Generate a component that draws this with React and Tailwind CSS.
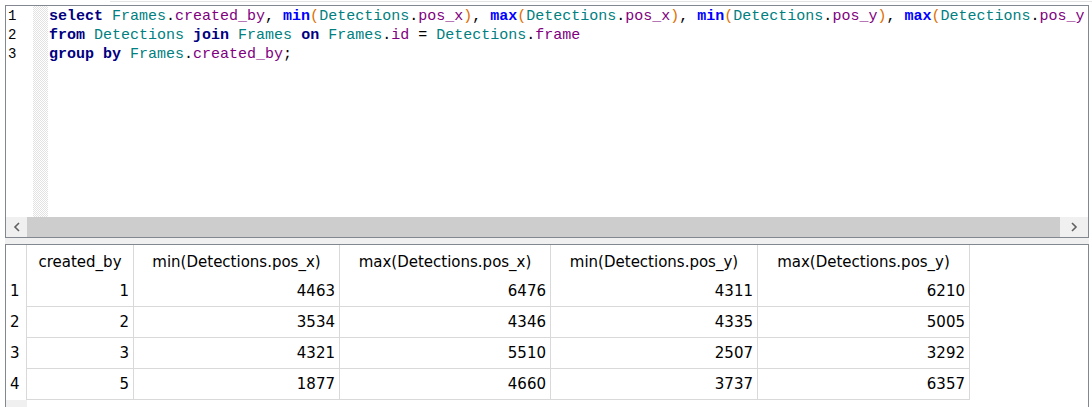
import React from 'react';

const K = 'font-bold text-[#000080]';
const F = 'font-bold text-[#0000ff]';
const T = 'text-[#008080]';
const C = 'text-[#800080]';
const O = 'text-[#e07000]';
const P = 'text-black';

const col = (a, b) => [
  [a, T], ['.', P], [b, C],
];

const agg = (fn, c) => [[fn, F], ['(', O], ...col('Detections', c), [')', O]];

// first line is wider than the editor; only the visible part is kept
const codeLines = [
  [
    ['select', K], [' ', P], ...col('Frames', 'created_by'), [', ', P],
    ...agg('min', 'pos_x'), [', ', P],
    ...agg('max', 'pos_x'), [', ', P],
    ...agg('min', 'pos_y'), [', ', P],
    ['max', F], ['(', O], ...col('Detections', 'pos_y'),
  ],
  [
    ['from', K], [' ', P], ['Detections', T], [' ', P], ['join', K], [' ', P], ['Frames', T],
    [' ', P], ['on', K], [' ', P], ...col('Frames', 'id'), [' = ', P], ...col('Detections', 'frame'),
  ],
  [
    ['group by', K], [' ', P], ...col('Frames', 'created_by'), [';', P],
  ],
];

const headers = ['created_by', 'min(Detections.pos_x)', 'max(Detections.pos_x)', 'min(Detections.pos_y)', 'max(Detections.pos_y)'];

const rows = [
  [1, 4463, 6476, 4311, 6210],
  [2, 3534, 4346, 4335, 5005],
  [3, 4321, 5510, 2507, 3292],
  [5, 1877, 4660, 3737, 6357],
];

const widths = ['w-[107px]', 'w-[206px]', 'w-[211px]', 'w-[207px]', 'w-[212px]'];

const Chevron = ({ dir }) => (
  <svg width="8" height="10" viewBox="0 0 8 10">
    <polyline
      points={dir === 'left' ? '6,1 2,5 6,9' : '2,1 6,5 2,9'}
      fill="none"
      stroke="#606060"
      strokeWidth="1.6"
    />
  </svg>
);

const App = () => {
  return (
    <div className="w-[1092px] h-[407px] bg-white overflow-hidden">
      {/* top strip */}
      <div className="h-[5px] pt-px">
        <div className="ml-[110px] h-px bg-[#e3e3e3]" />
      </div>

      {/* sql editor */}
      <div className="ml-[5px] w-[1084px] h-[233px] border border-[#828790] flex flex-col">
        <div className="flex flex-1 min-h-0 pt-px">
          <div className="w-[27px] bg-white font-['Liberation_Mono',monospace] text-[14px] text-black pl-[2px]">
            {codeLines.map((_, i) => (
              <div key={i} className="h-[19px] leading-[19px]">{i + 1}</div>
            ))}
          </div>
          <div className="w-[15px] -mt-px bg-[repeating-conic-gradient(#e2e2e2_0_25%,#ffffff_0_50%)] bg-[length:2px_2px]" />
          <div className="flex-1 min-w-0 pr-[4px]">
            <div className="overflow-hidden pl-px font-['Liberation_Mono',monospace] text-[15px] whitespace-pre">
              {codeLines.map((line, i) => (
                <div key={i} className="h-[19px] leading-[19px]">
                  {line.map(([t, cls], j) => (
                    <span key={j} className={cls}>{t}</span>
                  ))}
                </div>
              ))}
            </div>
          </div>
        </div>
        <div className="h-[20px] flex bg-[#f0f0f0]">
          <div className="w-[21px] flex items-center justify-center"><Chevron dir="left" /></div>
          <div className="flex-1 bg-[#cdcdcd]" />
          <div className="w-[28px] flex items-center justify-center"><Chevron dir="right" /></div>
        </div>
      </div>

      {/* gap */}
      <div className="ml-[5px] w-[1084px] h-[6px] bg-[#f0f0f0]" />

      {/* results grid */}
      <div className="ml-[5px] w-[1084px] h-[200px] border-l border-t border-r border-[#828790] font-['DejaVu_Sans',sans-serif] text-[15px] text-black">
        <div className="flex h-[31px]">
          <div className="w-[21px] border-r border-[#d9d9d9]" />
          {headers.map((h, i) => (
            <div key={h} className={`${widths[i]} border-r border-[#d9d9d9] flex items-center justify-center pt-[3px]`}>
              {h}
            </div>
          ))}
        </div>
        {rows.map((r, ri) => (
          <div key={ri} className="flex h-[31px]">
            <div className="w-[21px] border-r border-[#d9d9d9] flex items-center pl-[4px]">{ri + 1}</div>
            {r.map((v, i) => (
              <div key={i} className={`${widths[i]} border-r border-b border-[#d9d9d9] flex items-center justify-end pr-[4px]`}>
                {v}
              </div>
            ))}
          </div>
        ))}
        <div className="w-[21px] h-[20px] bg-[#f0f0f0]" />
      </div>
    </div>
  );
};

export default App;
